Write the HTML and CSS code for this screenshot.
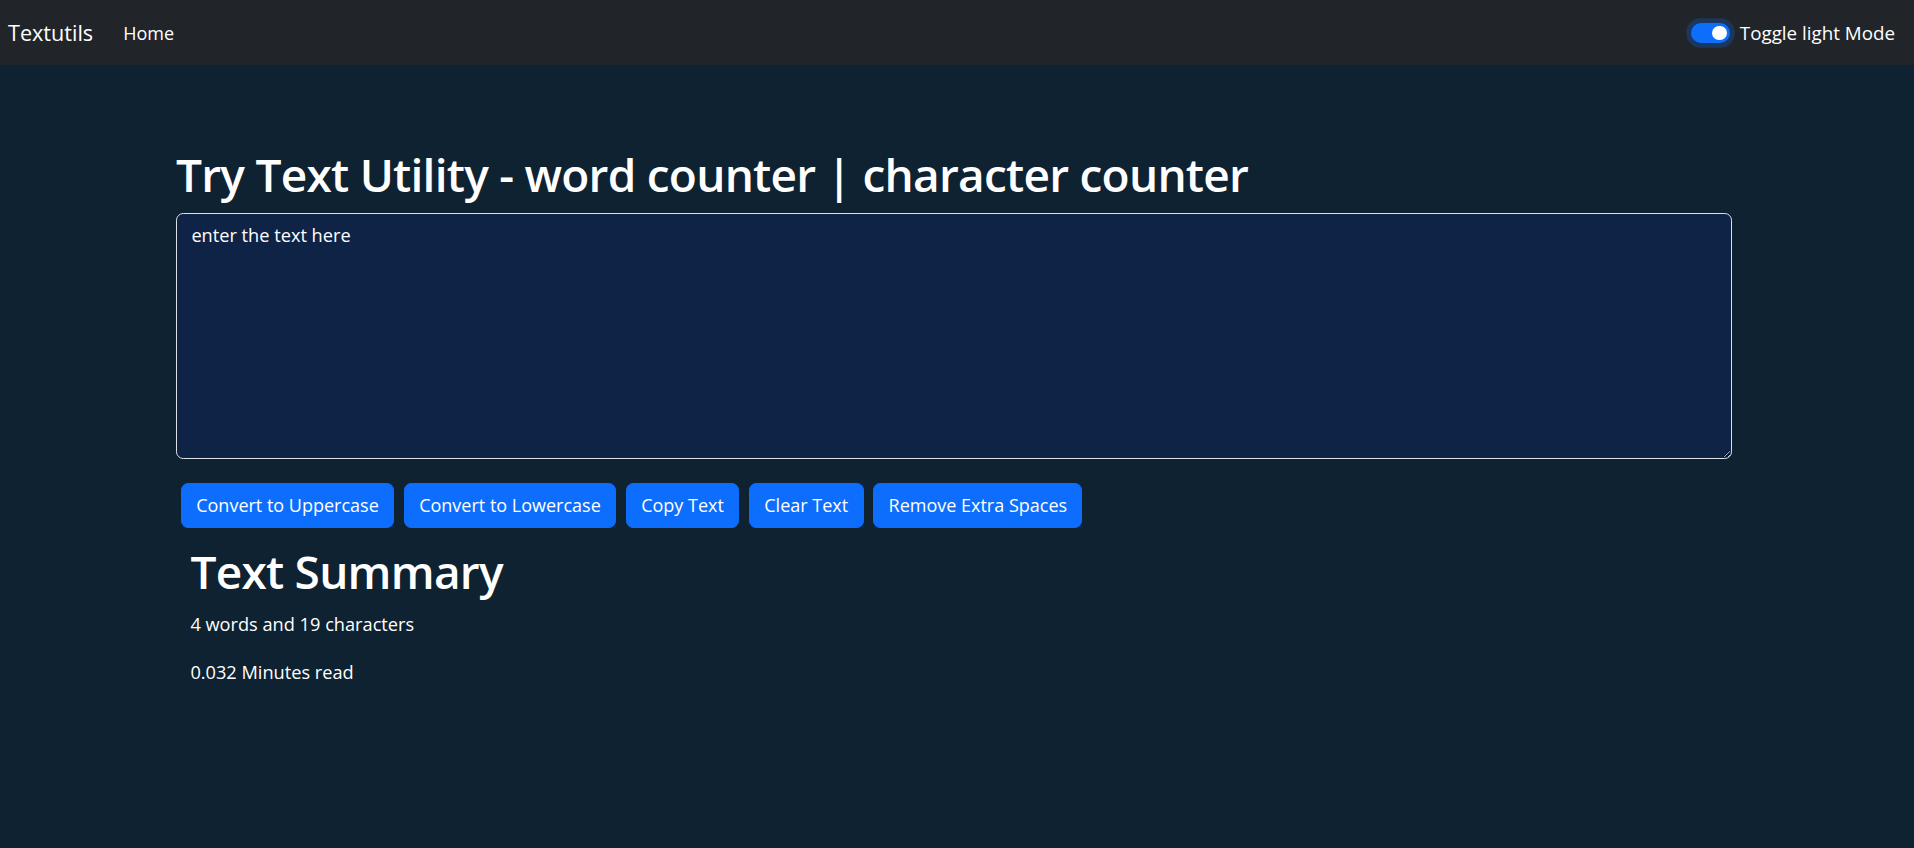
FILE: index.html
```html
<!DOCTYPE html>
<html lang="en">
<head>
    <meta charset="UTF-8">
    <meta name="viewport" content="width=device-width, initial-scale=1.0">
    <title>Textutils - Home</title>
    <link rel="stylesheet" href="styles.css">
</head>
<body>
    <nav class="navbar">
        <a class="brand" href="#">Textutils</a>
        <a class="nav-link" href="#">Home</a>
        <label class="switch">
            <input type="checkbox" checked>
            <span class="track"></span>
            <span class="switch-label">Toggle light Mode</span>
        </label>
    </nav>

    <div class="container">
        <h1>Try Text Utility - word counter | character counter</h1>
        <textarea id="myBox" class="text-box">enter the text here</textarea>

        <div class="actions">
            <button class="btn">Convert to Uppercase</button>
            <button class="btn">Convert to Lowercase</button>
            <button class="btn">Copy Text</button>
            <button class="btn">Clear Text</button>
            <button class="btn">Remove Extra Spaces</button>
        </div>

        <div class="summary">
            <h1>Text Summary</h1>
            <p>4 words and 19 characters</p>
            <p>0.032 Minutes read</p>
        </div>
    </div>
</body>
</html>
```

FILE: styles.css
```css
body {
    margin: 0;
    background: #0f2231;
    color: #fff;
    font-family: "Open Sans", "Noto Sans", sans-serif;
    font-size: 18.2px;
    line-height: 28.8px;
}
a {
    color: #fff;
    text-decoration: none;
}
.navbar {
    display: flex;
    align-items: center;
    height: 65px;
    padding: 1px 19px 0 8px;
    box-sizing: border-box;
    background: #212529;
}
.brand {
    font-size: 21.6px;
    margin-right: 30px;
}
.nav-link {
    font-size: 18px;
}
.switch {
    display: flex;
    align-items: center;
    margin-left: auto;
}
.switch input {
    display: none;
}
.track {
    position: relative;
    width: 38.4px;
    height: 19.2px;
    border-radius: 10px;
    background: #0d6efd;
    box-shadow: 0 0 0 4.8px rgba(13, 110, 253, 0.25);
    margin-right: 10px;
}
.track::after {
    content: "";
    position: absolute;
    top: 2.4px;
    right: 3px;
    width: 14.4px;
    height: 14.4px;
    border-radius: 50%;
    background: #fff;
}
.switch-label {
    font-size: 18.8px;
}
.container {
    width: 1556px;
    margin-left: 176px;
}
h1 {
    font-size: 46px;
    font-weight: 600;
    letter-spacing: -0.75px;
    line-height: 57.6px;
    margin: 0 0 9.6px;
}
.container > h1 {
    margin-top: 81px;
}
.text-box {
    display: block;
    box-sizing: border-box;
    width: 100%;
    height: 246px;
    padding: 7.2px 14.4px;
    margin-bottom: 19.2px;
    background: #0f2346;
    color: #fff;
    border: 1px solid #dee2e6;
    border-radius: 7.2px;
    font: inherit;
}
.actions {
    display: flex;
    gap: 9.6px;
    padding: 4.8px;
}
.btn {
    padding: 7.2px 14.4px;
    background: #0d6efd;
    color: #fff;
    border: 1px solid #0d6efd;
    border-radius: 7.2px;
    font: inherit;
    font-size: 18px;
    cursor: pointer;
}
.summary {
    margin-top: 10px;
    padding: 0 14.4px;
}
.summary p {
    margin: 0 0 19.2px;
}
```
